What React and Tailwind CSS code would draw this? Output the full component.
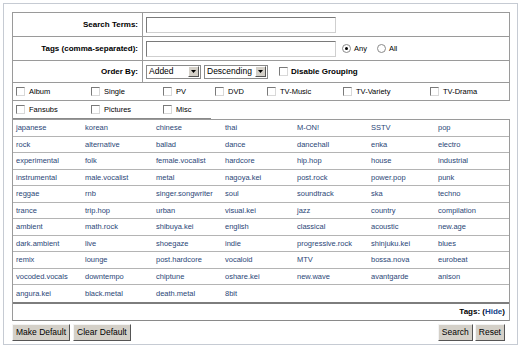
import React from "react";

const tags = [
  ["japanese", "korean", "chinese", "thai", "M-ON!", "SSTV", "pop"],
  ["rock", "alternative", "ballad", "dance", "dancehall", "enka", "electro"],
  ["experimental", "folk", "female.vocalist", "hardcore", "hip.hop", "house", "industrial"],
  ["instrumental", "male.vocalist", "metal", "nagoya.kei", "post.rock", "power.pop", "punk"],
  ["reggae", "rnb", "singer.songwriter", "soul", "soundtrack", "ska", "techno"],
  ["trance", "trip.hop", "urban", "visual.kei", "jazz", "country", "compilation"],
  ["ambient", "math.rock", "shibuya.kei", "english", "classical", "acoustic", "new.age"],
  ["dark.ambient", "live", "shoegaze", "indie", "progressive.rock", "shinjuku.kei", "blues"],
  ["remix", "lounge", "post.hardcore", "vocaloid", "MTV", "bossa.nova", "eurobeat"],
  ["vocoded.vocals", "downtempo", "chiptune", "oshare.kei", "new.wave", "avantgarde", "anison"],
  ["angura.kei", "black.metal", "death.metal", "8bit", "", "", ""],
];

const firstLine = [
  ["Album", "w-[75px]"],
  ["Single", "w-[72px]"],
  ["PV", "w-[52px]"],
  ["DVD", "w-[52px]"],
  ["TV-Music", "w-[76px]"],
  ["TV-Variety", "w-[87px]"],
  ["TV-Drama", "flex-1"],
];

const secondLine = [
  ["Fansubs", "w-[75px]"],
  ["Pictures", "w-[72px]"],
  ["Misc", "flex-1"],
];

const Box = () => (
  <span className="inline-block w-[9px] h-[9px] bg-white border border-t-[#7a7a7a] border-l-[#7a7a7a] border-r-[#d8d8d8] border-b-[#d8d8d8] shrink-0" />
);

const Radio = ({ on }) => (
  <span className="relative inline-block w-[9px] h-[9px] rounded-full bg-white border border-[#8a8a8a] shrink-0">
    {on && <span className="absolute left-[2px] top-[2px] w-[3px] h-[3px] rounded-full bg-black" />}
  </span>
);

const Select = ({ label, width }) => (
  <div className={`flex items-center h-[14px] border border-[#8a8a8a] bg-white ${width}`}>
    <span className="flex-1 pl-[2px] text-[8.5px] leading-none text-black">{label}</span>
    <span className="flex items-center justify-center w-[11px] h-[11px] mr-[1px] bg-[#d4d0c8] border border-t-white border-l-white border-r-[#555] border-b-[#555]">
      <svg width="5" height="3" viewBox="0 0 5 3">
        <path d="M0 0h5L2.5 3z" fill="#000" />
      </svg>
    </span>
  </div>
);

const Button = ({ children }) => (
  <button className="h-[17px] px-[3px] bg-[#d4d0c8] border border-t-[#f4f4f4] border-l-[#f4f4f4] border-r-[#555] border-b-[#555] text-[8.5px] leading-none text-black">
    {children}
  </button>
);

export default function App() {
  return (
    <div
      className="w-[523px] h-[350px] bg-white pt-[3px] pl-[3px] text-black"
      style={{ fontFamily: '"Liberation Sans", Arial, sans-serif' }}
    >
      <div className="w-[515px] h-[342px] border border-[#c6cbd3] pt-[8px] pl-[8px]">
        <div className="w-[498px]">
          {/* search form */}
          <div className="border border-[#9a9a9a]">
            <div className="flex h-[24px] border-b border-[#9a9a9a]">
              <div className="w-[130px] border-r border-[#9a9a9a] flex items-center justify-end pr-[4px] text-[8px] font-bold">
                Search Terms:
              </div>
              <div className="flex items-center pl-[3px]">
                <div className="w-[190px] h-[16px] bg-white border border-t-[#7a7a7a] border-l-[#7a7a7a] border-r-[#cfcfcf] border-b-[#cfcfcf]" />
              </div>
            </div>
            <div className="flex h-[24px] border-b border-[#9a9a9a]">
              <div className="w-[130px] border-r border-[#9a9a9a] flex items-center justify-end pr-[4px] text-[8px] font-bold">
                Tags (comma-separated):
              </div>
              <div className="flex items-center pl-[3px]">
                <div className="w-[190px] h-[16px] bg-white border border-t-[#7a7a7a] border-l-[#7a7a7a] border-r-[#cfcfcf] border-b-[#cfcfcf]" />
                <div className="flex items-center ml-[6px] gap-[3px] text-[7.5px]">
                  <Radio on />
                  <span>Any</span>
                  <span className="w-[4px]" />
                  <Radio />
                  <span>All</span>
                </div>
              </div>
            </div>
            <div className="flex h-[21px]">
              <div className="w-[130px] border-r border-[#9a9a9a] flex items-center justify-end pr-[4px] text-[8px] font-bold">
                Order By:
              </div>
              <div className="flex items-center pl-[3px] gap-[3px]">
                <Select label="Added" width="w-[55px]" />
                <Select label="Descending" width="w-[64px]" />
                <div className="flex items-center gap-[3px] ml-[8px]">
                  <Box />
                  <span className="text-[8px] font-bold">Disable Grouping</span>
                </div>
              </div>
            </div>
          </div>

          {/* type checkboxes */}
          <div className="border-l border-[#9a9a9a]">
            <div className="flex h-[18px] border-b border-r border-[#9a9a9a] text-[7.5px]">
              {firstLine.map(([label, w]) => (
                <div key={label} className={`flex items-center gap-[4px] pl-[3px] ${w}`}>
                  <Box />
                  <span>{label}</span>
                </div>
              ))}
            </div>
            <div className="flex h-[18px] w-[198px] border-b border-[#8a8a8a] text-[7.5px]">
              {secondLine.map(([label, w]) => (
                <div key={label} className={`flex items-center gap-[4px] pl-[3px] ${w}`}>
                  <Box />
                  <span>{label}</span>
                </div>
              ))}
            </div>
          </div>

          {/* tag table */}
          <div className="border-l border-r border-[#9a9a9a]">
            <div className="border-t border-b-2 border-t-[#9a9a9a] border-b-[#7d7d7d]">
              {tags.map((row, i) => (
                <div
                  key={i}
                  className={`grid grid-cols-[69px_71px_69px_72px_74px_67px_1fr] h-[16.5px] ${
                    i < tags.length - 1 ? "border-b border-[#b4b4b4]" : ""
                  }`}
                >
                  {row.map((t, j) => (
                    <div key={j} className="flex items-center pl-[3px] text-[7.5px] text-[#2a4677]">
                      {t}
                    </div>
                  ))}
                </div>
              ))}
            </div>
            <div className="flex items-center justify-end h-[17px] pr-[4px] border-b border-[#8a8a8a] text-[8px] font-bold">
              Tags: (<span className="text-[#123f8a]">Hide</span>)
            </div>
          </div>

          {/* buttons */}
          <div className="flex items-center justify-between mt-[3px] pr-[5px]">
            <div className="flex gap-[3px]">
              <Button>Make Default</Button>
              <Button>Clear Default</Button>
            </div>
            <div className="flex gap-[2px]">
              <Button>Search</Button>
              <Button>Reset</Button>
            </div>
          </div>
        </div>
      </div>
    </div>
  );
}
